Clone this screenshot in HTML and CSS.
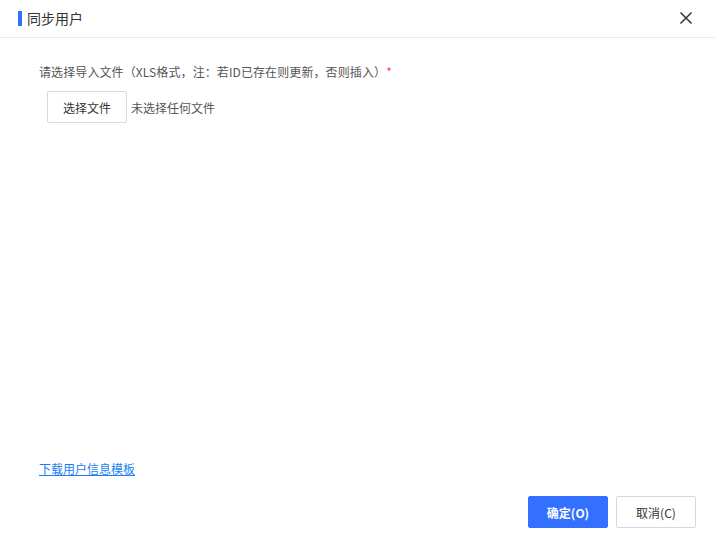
FILE: index.html
```html
<!DOCTYPE html>
<html lang="zh">
<head>
<meta charset="utf-8">
<link rel="stylesheet" href="styles.css">
</head>
<body>
<div class="dialog">
  <div class="header">
    <div class="title"><span class="bar"></span>同步用户</div>
    <svg class="close" width="14" height="14" viewBox="0 0 14 14"><path d="M1.5 1.5L12.5 12.5M12.5 1.5L1.5 12.5" stroke="#333" stroke-width="1.5" fill="none"/></svg>
  </div>
  <div class="body">
    <div class="label">请选择导入文件（XLS格式，注：若ID已存在则更新，否则插入）<span class="req">*</span></div>
    <div class="file-row">
      <button class="file-btn">选择文件</button>
      <span class="file-none">未选择任何文件</span>
    </div>
    <div class="spacer"></div>
    <a class="link" href="#">下载用户信息模板</a>
  </div>
  <div class="footer">
    <button class="btn primary">确定(O)</button>
    <button class="btn">取消(C)</button>
  </div>
</div>
</body>
</html>
```
FILE: styles.css
```css
* { box-sizing: border-box; }
html, body { margin: 0; padding: 0; background: #fff; }
body { font-family: "Noto Sans CJK SC", "Liberation Sans", sans-serif; color: #333; }
.dialog { width: 715px; height: 543px; display: flex; flex-direction: column; }
.header { height: 38px; border-bottom: 1px solid #eaeaea; display: flex; align-items: center; justify-content: space-between; padding: 0 22px 0 18px; }
.title { display: flex; align-items: center; font-size: 14px; color: #333; line-height: 16px; padding-bottom: 1px; }
.bar { width: 4px; height: 15px; background: #3370ff; margin-right: 5px; }
.close { display: block; margin-bottom: 1px; }
.body { flex: 1; display: flex; flex-direction: column; padding: 26px 39px 0; }
.label { font-size: 12px; color: #555; line-height: 16px; letter-spacing: 0.1px; }
.req { color: #f54a45; margin-left: 0; }
.file-row { display: flex; align-items: center; margin-top: 11px; padding-left: 8px; }
.file-btn { width: 80px; height: 32px; border: 1px solid #d9d9d9; border-radius: 2px; background: #fff; font-family: inherit; font-size: 12px; color: #333; padding: 0; }
.file-none { font-size: 12px; color: #555; margin-left: 4px; }
.spacer { flex: 1; }
.link { font-size: 12px; color: #1a7ff0; text-decoration: underline; line-height: 16px; margin-bottom: 19px; align-self: flex-start; }
.footer { display: flex; justify-content: flex-end; gap: 8px; padding: 0 19px 15px; }
.btn { width: 80px; height: 32px; border: 1px solid #d4d7de; border-radius: 2px; background: #fff; font-family: inherit; font-size: 12px; color: #333; padding: 0; }
.btn.primary { background: #3370ff; border-color: #3370ff; color: #fff; font-weight: bold; }
```
